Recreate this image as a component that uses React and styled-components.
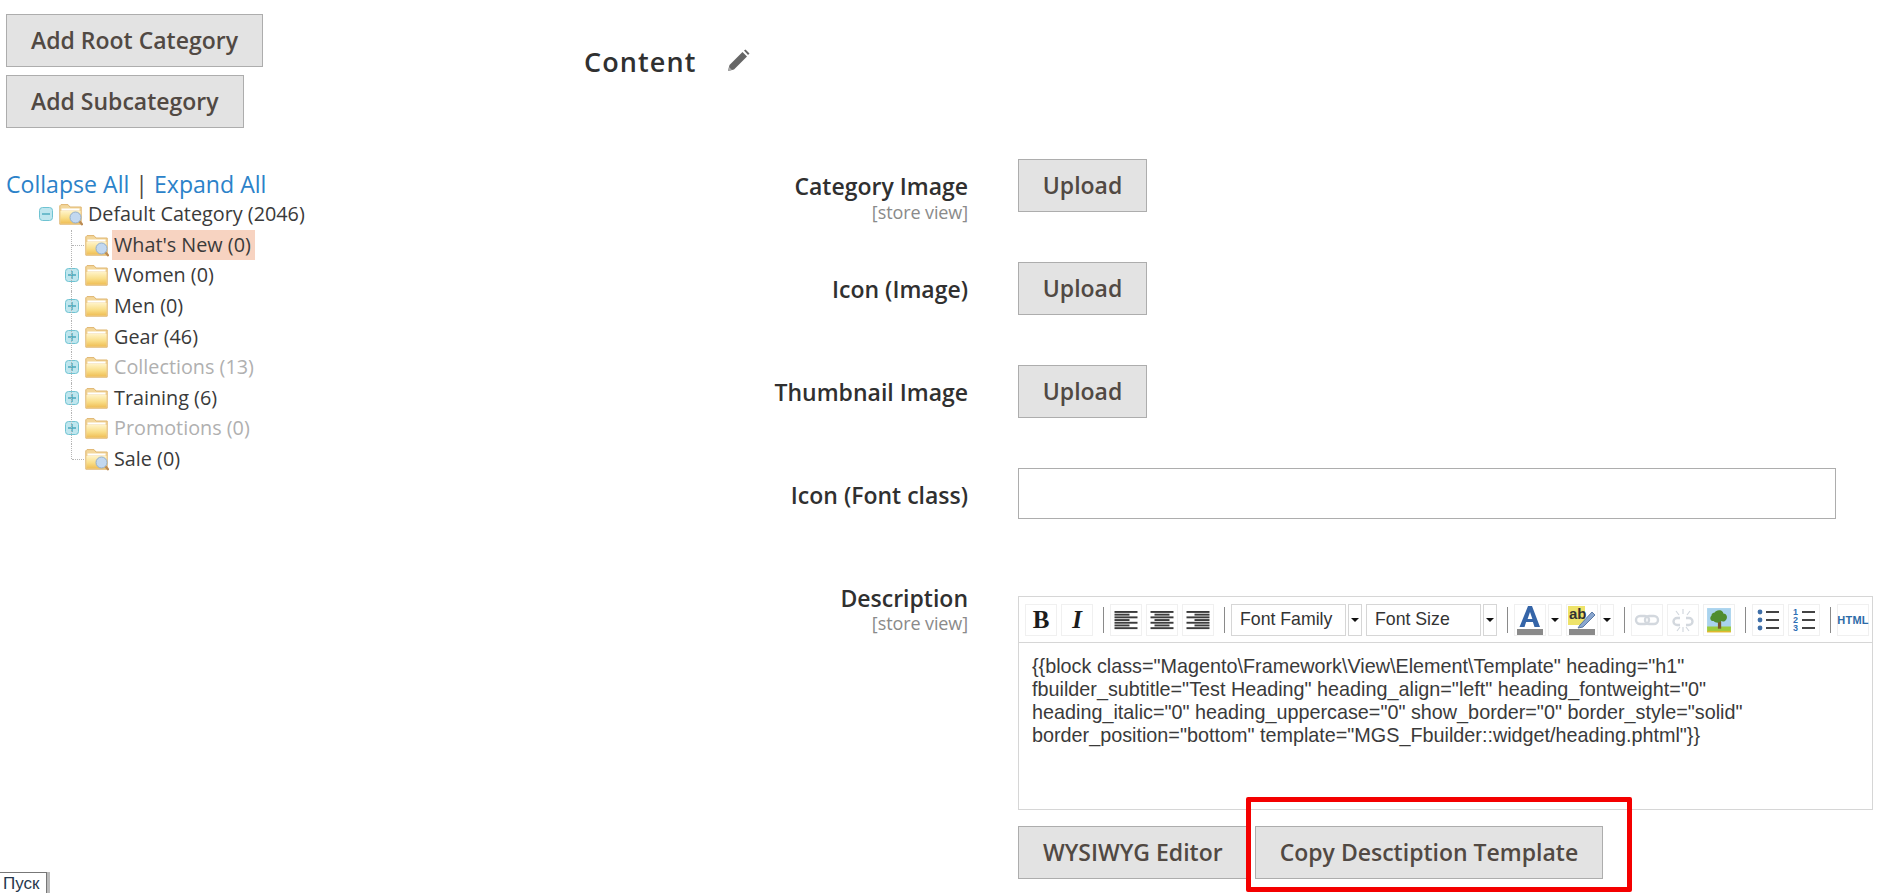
import React from "react";
import styled, { createGlobalStyle } from "styled-components";

const Global = createGlobalStyle`
  html, body { margin: 0; padding: 0; background: #fff; }
  body { font-family: "Open Sans", sans-serif; color: #303030; }
`;

const Page = styled.div`
  position: relative;
  display: grid;
  grid-template-columns: 560px 1fr;
  height: 893px;
  overflow: hidden;
`;

const Sidebar = styled.aside`
  padding: 14px 0 0 6px;
`;

const Button = styled.button`
  display: block;
  box-sizing: border-box;
  height: 53px;
  width: ${(p) => (p.$w ? `${p.$w}px` : "auto")};
  padding: 0 ${(p) => (p.$w ? 0 : 24)}px 2px;
  border: 1px solid #adadad;
  background: #e3e3e3;
  color: #514943;
  font-family: "Open Sans", sans-serif;
  font-size: 23px;
  font-weight: 600;
  white-space: nowrap;
`;

const SideActions = styled.div`
  display: flex;
  flex-direction: column;
  align-items: flex-start;
  gap: 8px;
`;

const TreeLinks = styled.div`
  margin-top: 41px;
  font-size: 23.1px;
  line-height: 30px;
  color: #514943;
  a { color: #2b82c9; text-decoration: none; }
`;

const Tree = styled.div`
  padding-left: 33px;
`;

const Row = styled.div`
  display: flex;
  align-items: center;
  height: 30.6px;
  font-size: 19.8px;
  color: ${(p) => (p.$muted ? "#b0b0b0" : "#3a3a3a")};
  padding-left: ${(p) => (p.$root ? 0 : 26)}px;
`;

const Joint = styled.span`
  position: relative;
  flex: none;
  width: 14px;
  height: 100%;
  margin-right: 6px;
  display: flex;
  align-items: center;
  &::before {
    content: "";
    display: ${(p) => (p.$root ? "none" : "block")};
    position: absolute;
    left: 6px;
    top: 0;
    height: ${(p) => (p.$last ? "50%" : "100%")};
    border-left: 1px dotted #b5b5b5;
  }
  &::after {
    content: "";
    display: ${(p) => (p.$leaf ? "block" : "none")};
    position: absolute;
    left: 7px;
    width: 12px;
    top: 50%;
    border-top: 1px dotted #b5b5b5;
  }
`;

const RowLabel = styled.span`
  margin-left: 3px;
  padding: 0 4px 0 2px;
  height: 30px;
  line-height: 29px;
  white-space: nowrap;
  background: ${(p) => (p.$active ? "#f7d3c1" : "transparent")};
`;

const Main = styled.main`
  padding-top: 43px;
`;

const Heading = styled.div`
  display: flex;
  align-items: center;
  gap: 29px;
  margin: 0 0 80px 24px;
  height: 36px;
  font-size: 27px;
  font-weight: 600;
  letter-spacing: 1.1px;
  color: #303030;
`;

const Field = styled.div`
  display: grid;
  grid-template-columns: 408px 1fr;
  column-gap: 50px;
  height: ${(p) => p.$height}px;
`;

const Label = styled.div`
  text-align: right;
  margin-top: ${(p) => p.$top ?? 13}px;
  font-size: 23px;
  line-height: 28px;
  font-weight: 600;
  color: #303030;
  small {
    display: block;
    margin-top: ${(p) => p.$hint ?? 0}px;
    font-size: 18px;
    line-height: 22px;
    font-weight: 400;
    color: #8a8a8a;
    letter-spacing: -0.1px;
  }
`;

const TextInput = styled.div`
  box-sizing: border-box;
  width: 818px;
  height: 51px;
  border: 1px solid #adadad;
  background: #fff;
`;

const Editor = styled.div`
  width: 853px;
  border: 1px solid #d6d6d6;
`;

const Toolbar = styled.div`
  display: flex;
  align-items: center;
  gap: 4px;
  height: 45px;
  padding: 0 0 0 6px;
  border-bottom: 1px solid #d6d6d6;
`;

const ToolButton = styled.span`
  flex: none;
  display: flex;
  align-items: center;
  justify-content: center;
  width: 32px;
  height: 32px;
  box-sizing: border-box;
  border: 1px solid #f0f0f0;
  font-family: "Liberation Serif", serif;
  font-size: 25px;
  font-weight: 700;
  font-style: ${(p) => (p.$italic ? "italic" : "normal")};
  color: #1c1c1c;
`;

const Separator = styled.span`
  flex: none;
  width: 1px;
  height: 26px;
  margin: 0 2px 0 6px;
  background: #8a8a8a;
`;

const Select = styled.span`
  flex: none;
  box-sizing: border-box;
  display: flex;
  align-items: center;
  width: 115px;
  height: 32px;
  padding-left: 8px;
  border: 1px solid #d6d6d6;
  font-family: "Liberation Sans", sans-serif;
  font-size: 17.7px;
  color: #333;
`;

const Arrow = styled.span`
  flex: none;
  box-sizing: border-box;
  display: flex;
  align-items: center;
  justify-content: center;
  width: 14px;
  height: 32px;
  margin-left: -2px;
  border: 1px solid ${(p) => (p.$plain ? "#f0f0f0" : "#d6d6d6")};
  &::after {
    content: "";
    border-left: 4px solid transparent;
    border-right: 4px solid transparent;
    border-top: 4px solid #111;
  }
`;

const Code = styled.div`
  height: 166px;
  padding: 12px 13px 0;
  box-sizing: border-box;
  font-family: "Liberation Sans", sans-serif;
  font-size: 19.8px;
  line-height: 23px;
  color: #3a3a3a;
  white-space: nowrap;
`;

const EditorActions = styled.div`
  display: flex;
  gap: 7px;
  margin-top: 16px;
`;

const Annotation = styled.div`
  position: absolute;
  left: 1246px;
  top: 797px;
  width: 386px;
  height: 95px;
  box-sizing: border-box;
  border: 5px solid #f40000;
  border-radius: 2px;
`;

const Start = styled.div`
  position: absolute;
  left: 0;
  bottom: 0;
  width: 47px;
  height: 21px;
  box-sizing: border-box;
  border: 1px solid #777;
  border-left: 0;
  border-bottom: 0;
  padding-left: 3px;
  font-family: "Liberation Sans", sans-serif;
  font-size: 17px;
  line-height: 21px;
  color: #26384d;
  box-shadow: 3px 0 0 #bbb;
`;

const FolderGradient = () => (
  <svg width="0" height="0" style={{ position: "absolute" }}>
    <defs>
      <linearGradient id="folderFill" x1="0" y1="0" x2="0" y2="1">
        <stop offset="0" stopColor="#fff3c8" />
        <stop offset="0.55" stopColor="#f9de88" />
        <stop offset="1" stopColor="#efbe56" />
      </linearGradient>
    </defs>
  </svg>
);

const Folder = ({ search }) => (
  <svg width="24" height="24" viewBox="0 0 24 24">
    <path d="M.8 3.800 2 2.600h7l2 2.400h11.200v17.200H.8Z" fill="#f3d79b" stroke="#dfb670" />
    <path d="M2.500 6.500h18v2h-18Z" fill="#fff" />
    <path d="M1.500 9h20v12.500h-20Z" fill="url(#folderFill)" />
    {search && (
      <>
        <circle cx="16.500" cy="15.500" r="5.500" fill="#c2d8f0" stroke="#93aecc" />
        <path d="m20.500 19.500 3.200 3.400" stroke="#bb8a52" strokeWidth="2.200" />
      </>
    )}
  </svg>
);

const Toggle = ({ open }) => (
  <svg width="14" height="14" viewBox="0 0 14 14">
    <rect x=".5" y=".5" width="13" height="13" rx="3" fill="#bfe6ee" stroke="#6fc3d2" />
    <path d={open ? "M3 7h8" : "M3 7h8M7 3v8"} stroke="#4aa9bd" strokeWidth="1.4" />
  </svg>
);

const Pencil = () => (
  <svg width="24" height="24" viewBox="0 0 24 24">
    <path d="M2 22 3.500 16 16.500 3l4.500 4.500L8 20.500Z" fill="#666" />
    <path d="M18 1.500 19.500 0.500 23.500 4.500 22 6Z" fill="#666" />
    <path d="M2 22 3 18l3 3Z" fill="#aaa" />
  </svg>
);

const AlignIcon = ({ kind }) => {
  const rows = [0, 1, 2, 3, 4, 5, 6];
  return (
    <svg width="24" height="20" viewBox="0 0 24 20">
      {rows.map((i) => {
        const w = i % 2 === 0 ? 23 : 15;
        const x = kind === "left" ? 0.5 : kind === "right" ? 23.5 - w : 12 - w / 2;
        return <rect key={i} x={x} y={1 + i * 2.7} width={w} height="1.9" fill="#3c3c3c" />;
      })}
    </svg>
  );
};

const ColorA = () => (
  <svg width="30" height="30" viewBox="0 0 30 30">
    <path d="M13 1h4l8 21h-5.500l-1.600-5h-6.800l-1.600 5H4.500Zm2 6-2.400 7h4.800Z" fill="#3565a8" />
    <rect x="2" y="24" width="26" height="6" fill="#8a8a8a" />
  </svg>
);

const Highlight = () => (
  <svg width="30" height="30" viewBox="0 0 30 30">
    <rect x="1" y="1" width="17" height="19" fill="#eee36a" />
    <text x="2" y="14" fontFamily="Liberation Sans" fontSize="15" fill="#333">ab</text>
    <path d="M13 20 25 7l3 3-12 12-5 1Z" fill="#8aa7cf" stroke="#5b7aa6" />
    <rect x="2" y="24" width="26" height="6" fill="#8a8a8a" />
  </svg>
);

const LinkIcon = ({ broken }) => (
  <svg width="26" height="26" viewBox="0 0 26 26" fill="none" stroke="#d3d8de" strokeWidth="2.400">
    {broken ? (
      <>
        <path d="M10 11H7a3 3 0 0 0 0 7h3M16 11h3a3 3 0 0 1 0 7h-3" />
        <path d="M13 2v5M6 4l3 4M20 4l-3 4M13 20v5M7 24l3-4M19 24l-3-4" strokeWidth="1.200" />
      </>
    ) : (
      <>
        <rect x="2" y="9" width="13" height="8" rx="4" />
        <rect x="11" y="9" width="13" height="8" rx="4" />
      </>
    )}
  </svg>
);

const ImageIcon = () => (
  <svg width="26" height="26" viewBox="0 0 24 24">
    <rect x="1" y="1" width="22" height="19" fill="#a9d3ee" />
    <rect x="1" y="18" width="22" height="5" fill="#9ccb3d" />
    <rect x="1" y="22" width="22" height="1.500" fill="#e0b92e" />
    <rect x="11" y="13" width="3" height="7" fill="#7a5a2a" />
    <path d="M12 3c3 0 4 2 4 3 3 0 4 3 3 5s-3 3-5 2c-2 2-5 2-7 0-3 0-4-3-2-5 0-2 2-3 3-3 1-1 2-2 4-2Z" fill="#4f8d2f" />
  </svg>
);

const ListIcon = ({ numbered }) => (
  <svg width="24" height="24" viewBox="0 0 24 24">
    {[4, 12, 20].map((y) =>
      numbered ? (
        <text key={y} x="1" y={y + 3} fontFamily="Liberation Sans" fontSize="9" fontWeight="700" fill="#2f6fb5">
          {y === 4 ? 1 : y === 12 ? 2 : 3}
        </text>
      ) : (
        <circle key={y} cx="4" cy={y} r="2.400" fill="#3f6fa8" />
      )
    )}
    {[4, 12, 20].map((y) => (
      <rect key={y} x="10" y={y - 1} width="13" height="2" fill="#444" />
    ))}
  </svg>
);

const HtmlMark = styled.span`
  font-family: "Liberation Sans", sans-serif;
  font-size: 11px;
  font-weight: 700;
  letter-spacing: 0.2px;
  color: #2d6ca8;
`;

const categories = [
  { name: "What's New (0)", leaf: true, active: true },
  { name: "Women (0)" },
  { name: "Men (0)" },
  { name: "Gear (46)" },
  { name: "Collections (13)", muted: true },
  { name: "Training (6)" },
  { name: "Promotions (0)", muted: true },
  { name: "Sale (0)", leaf: true, last: true },
];

const App = () => {
  return (
    <Page>
      <Global />
      <FolderGradient />
      <Sidebar>
        <SideActions>
          <Button>Add Root Category</Button>
          <Button>Add Subcategory</Button>
        </SideActions>
        <TreeLinks>
          <a>Collapse All</a> | <a>Expand All</a>
        </TreeLinks>
        <Tree>
          <Row $root>
            <Joint $root><Toggle open /></Joint>
            <Folder search />
            <RowLabel>Default Category (2046)</RowLabel>
          </Row>
          {categories.map((c) => (
            <Row key={c.name} $muted={c.muted}>
              <Joint $leaf={c.leaf} $last={c.last}>{!c.leaf && <Toggle />}</Joint>
              <Folder search={c.leaf} />
              <RowLabel $active={c.active}>{c.name}</RowLabel>
            </Row>
          ))}
        </Tree>
      </Sidebar>
      <Main>
        <Heading>
          Content
          <Pencil />
        </Heading>
        <Field $height={103}>
          <Label $hint={1}>Category Image<small>[store view]</small></Label>
          <div><Button $w={129}>Upload</Button></div>
        </Field>
        <Field $height={103}>
          <Label>Icon (Image)</Label>
          <div><Button $w={129}>Upload</Button></div>
        </Field>
        <Field $height={103}>
          <Label>Thumbnail Image</Label>
          <div><Button $w={129}>Upload</Button></div>
        </Field>
        <Field $height={128}>
          <Label>Icon (Font class)</Label>
          <TextInput />
        </Field>
        <Field>
          <Label $top={-12}>Description<small>[store view]</small></Label>
          <div>
            <Editor>
              <Toolbar>
                <ToolButton>B</ToolButton>
                <ToolButton $italic>I</ToolButton>
                <Separator />
                <ToolButton><AlignIcon kind="left" /></ToolButton>
                <ToolButton><AlignIcon kind="center" /></ToolButton>
                <ToolButton><AlignIcon kind="right" /></ToolButton>
                <Separator />
                <Select>Font Family</Select>
                <Arrow />
                <Select>Font Size</Select>
                <Arrow />
                <Separator />
                <ToolButton><ColorA /></ToolButton>
                <Arrow $plain />
                <ToolButton><Highlight /></ToolButton>
                <Arrow $plain />
                <Separator />
                <ToolButton><LinkIcon /></ToolButton>
                <ToolButton><LinkIcon broken /></ToolButton>
                <ToolButton><ImageIcon /></ToolButton>
                <Separator />
                <ToolButton><ListIcon /></ToolButton>
                <ToolButton><ListIcon numbered /></ToolButton>
                <Separator />
                <ToolButton><HtmlMark>HTML</HtmlMark></ToolButton>
              </Toolbar>
              <Code>
                {'{{block class="Magento\\Framework\\View\\Element\\Template" heading="h1"'}<br />
                {'fbuilder_subtitle="Test Heading" heading_align="left" heading_fontweight="0"'}<br />
                {'heading_italic="0" heading_uppercase="0" show_border="0" border_style="solid"'}<br />
                {'border_position="bottom" template="MGS_Fbuilder::widget/heading.phtml"}}'}
              </Code>
            </Editor>
            <EditorActions>
              <Button>WYSIWYG Editor</Button>
              <Button>Copy Desctiption Template</Button>
            </EditorActions>
          </div>
        </Field>
      </Main>
      <Annotation />
      <Start>Пуск</Start>
    </Page>
  );
};

export default App;
